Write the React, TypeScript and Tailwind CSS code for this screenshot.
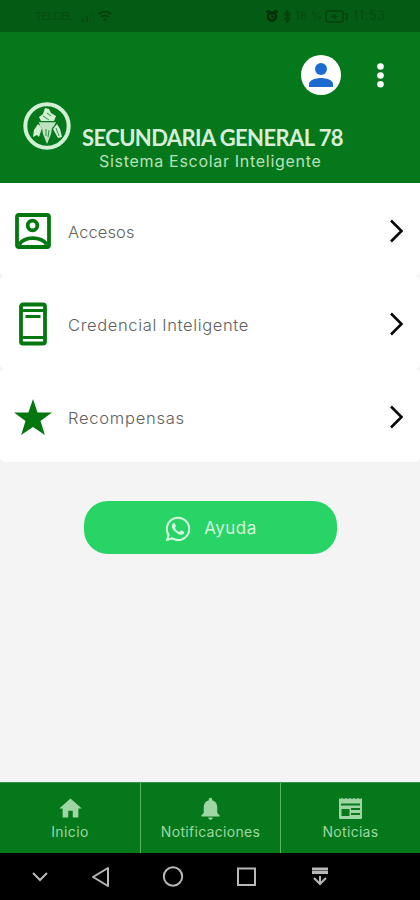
import type { ReactNode } from 'react';
import { MdHome, MdNotifications } from 'react-icons/md';
import { FaWhatsapp } from 'react-icons/fa';

const AccessIcon = () => (
  <svg width="36" height="36" viewBox="0 0 36 36" fill="none" stroke="#04780f" strokeWidth="3.8">
    <rect x="2" y="2" width="32" height="32" rx="2" />
    <circle cx="17.5" cy="12.5" r="4.8" />
    <path d="M4 31.5c3-4 8-6.3 13.5-6.3S29 27.5 32 31.5" />
  </svg>
);

const CardIcon = () => (
  <svg width="28" height="44" viewBox="0 0 28 44" fill="none" stroke="#04780f" strokeWidth="3.8">
    <rect x="2" y="2.5" width="24" height="39" rx="2" />
    <path d="M3 8.5h22M3 35.5h22" strokeWidth="2.8" />
    <path d="M6.5 14.5h15" strokeWidth="3" />
  </svg>
);

const StarIcon = () => (
  <svg width="38" height="36" viewBox="0 0 38 36" fill="#04780f">
    <path d="M19 0l4.6 13.6H38L26.5 22l4.4 14L19 28 7.1 36l4.4-14L0 13.6h14.4z" />
  </svg>
);

const SchoolLogo = () => (
  <svg width="48" height="48" viewBox="0 0 48 48" fill="none">
    <circle cx="24" cy="24" r="21.7" stroke="#d2eed3" strokeWidth="4" />
    <path d="M22 6l4 1 2 4 5 3-2 5H18l-2-4 4-3z" fill="#d2eed3" />
    <path d="M16 20h17l-2 4-2 2-1 6-4 10-4-10-1-6-2-2z" fill="#bfe2c1" />
    <path d="M15 22l4 4-3 9-2-2-4 2 1-7zM34 22l3 5 2 8-4 1-5-9z" fill="#d2eed3" />
    <path d="M17 19.8h15M23 27v7M26 28l-1 7M20 14l6 4M24 11l4 3M33 26l3 8" stroke="#04781b" strokeWidth=".8" />
  </svg>
);

const NewsIcon = () => (
  <svg width="25" height="23" viewBox="0 0 25 23">
    <path d="M1 1l1 1 2-1 2 1 2-1 2 1 2-1 2 1 2-1 2 1 2-1 2 1 2-1v20q0 1-1 1H2q-1 0-1-1z" fill="#9fd6a3" />
    <path d="M3 7.5h19M13 12h9M13 17h9" stroke="#04781b" strokeWidth="2" />
    <path d="M3.5 12h8v7h-8z" fill="#04781b" />
  </svg>
);

const rows: { label: string; icon: ReactNode; text: string }[] = [
  { label: 'Accesos', icon: <AccessIcon />, text: 'tracking-[0.1px]' },
  { label: 'Credencial Inteligente', icon: <CardIcon />, text: 'tracking-[0.65px]' },
  { label: 'Recompensas', icon: <StarIcon />, text: 'tracking-[0.75px]' },
];

const tabs: { label: string; icon: ReactNode; text: string }[] = [
  { label: 'Inicio', icon: <MdHome size={27} />, text: 'tracking-[0.4px]' },
  { label: 'Notificaciones', icon: <MdNotifications size={27} />, text: 'tracking-[0.3px]' },
  { label: 'Noticias', icon: <NewsIcon />, text: 'tracking-[0.3px]' },
];

function StatusBar() {
  return (
    <div className="flex h-8 items-center bg-[#045c14] pl-[35px] text-[12px] text-[#064a0e]">
      <span className="w-[36px] text-[11px] tracking-[-0.5px]">TELCEL</span>
      <svg className="ml-2.5" width="13" height="12" viewBox="0 0 13 12" fill="#064a0e">
        <path d="M0 9h3v3H0zM5 6h2v6H5z" />
        <path d="M9 3h1v9H9zM12 0h1v12h-1z" opacity=".4" />
      </svg>
      <svg className="ml-1" width="14" height="12" viewBox="0 0 14 12" fill="none" stroke="#063f0c" strokeWidth="2">
        <path d="M1 4q6-5 12 0M3 7q4-3 8 0M5.5 9.5h3" />
      </svg>
      <div className="ml-[154px] flex items-center">
        <svg width="12" height="12" viewBox="0 0 12 12" fill="none" stroke="#032d08">
          <circle cx="6" cy="6.5" r="4" strokeWidth="2.5" />
          <path d="M1 3V1h3M8 1h3v2M6 4v3h2" strokeWidth="1.5" />
        </svg>
        <svg className="ml-[5px]" width="9" height="13" viewBox="0 0 9 13" fill="none" stroke="#063f0c" strokeWidth="1.4">
          <path d="M1 3l6 6-3 3V1l3 3-6 6" />
        </svg>
        <span className="ml-[3px] w-[29px] whitespace-nowrap">18 %</span>
        <svg className="ml-px" width="23" height="13" viewBox="0 0 23 13" fill="none" stroke="#063f0c" strokeWidth="1.5">
          <rect x="1" y="1" width="17" height="11" rx="2" />
          <path d="M20 4h2v5h-2M6 6.5h7M9.5 4v5" />
        </svg>
        <span className="ml-[5px] text-[13px] tracking-[0.5px]">11:53</span>
      </div>
    </div>
  );
}

function Header() {
  return (
    <header className="h-[151px] bg-[#04781b]">
      <div className="flex h-[70px] items-start justify-end pt-[23px]">
        <div className="flex size-10 items-center justify-center rounded-full bg-white">
          <svg width="24" height="24" viewBox="0 0 24 24" fill="#1b6bd0">
            <circle cx="12" cy="6" r="6" />
            <path d="M0 24v-3c0-4 7-6 12-6s12 2 12 6v3z" />
          </svg>
        </div>
        <svg className="mt-2 mr-9 ml-[36px]" width="7" height="25" viewBox="0 0 7 25" fill="white">
          <circle cx="3.5" cy="3.5" r="3.3" />
          <circle cx="3.5" cy="12.5" r="3.3" />
          <circle cx="3.5" cy="21.3" r="3.3" />
        </svg>
      </div>
      <div className="flex pl-[23px]">
        <SchoolLogo />
        <div className="pt-[23px] pl-[11px] whitespace-nowrap">
          <h1 className="font-['Lato',sans-serif] text-[22px] leading-[26px] font-bold tracking-[-0.6px] text-[#d7efd8]">
            SECUNDARIA GENERAL 78
          </h1>
          <p className="pl-[17px] text-[16px] leading-5 tracking-[0.7px] text-[#b9e0bb]">Sistema Escolar Inteligente</p>
        </div>
      </div>
    </header>
  );
}

export default function App() {
  return (
    <div className="flex h-[900px] w-[420px] flex-col overflow-hidden bg-[#f4f4f4] font-['Inter',sans-serif]">
      <StatusBar />
      <Header />

      <main className="flex-1">
        {rows.map((row) => (
          <button key={row.label} className="flex h-[93px] w-full items-center rounded-[5px] bg-white pr-4 first:rounded-t-none">
            <span className="flex w-[66px] justify-center pt-0.5">{row.icon}</span>
            <span className={`flex-1 pt-[5px] pl-0.5 text-left text-[16.5px] font-light text-[#606060] ${row.text}`}>{row.label}</span>
            <svg className="mt-0.5" width="15" height="24" viewBox="0 0 15 24" fill="none" stroke="#080808" strokeWidth="2.6">
              <path d="M2 1.5L12.5 12 2 22.5" />
            </svg>
          </button>
        ))}

        <button className="mt-[39px] ml-[84px] flex h-[53px] w-[253px] items-center justify-center gap-3 rounded-[24px] bg-[#28d466] text-[#d5f8df]">
          <FaWhatsapp className="mt-0.5" size={28} />
          <span className="pt-0.5 text-[17px] tracking-[0.5px]">Ayuda</span>
        </button>
      </main>

      {/* Bottom tabs */}
      <nav className="grid h-[71px] grid-cols-[141px_140px_139px] divide-x divide-[#58b45f] border-t border-[#399348] bg-[#04781b]">
        {tabs.map((tab) => (
          <button key={tab.label} className="flex flex-col items-center pt-3 text-[#9fd6a3]">
            <span className="flex h-[27px] items-center">{tab.icon}</span>
            <span className={`text-[14px] leading-5 ${tab.text}`}>{tab.label}</span>
          </button>
        ))}
      </nav>

      {/* Android navigation */}
      <div className="flex h-[47px] items-center bg-black pl-8">
        <svg width="300" height="26" viewBox="0 0 300 26" fill="none" stroke="#b8b8b8" strokeWidth="2">
          <path d="M1 9l7 7 7-7" />
          <path d="M76 4v18L61 13z" strokeLinejoin="round" />
          <circle cx="141" cy="12.5" r="9.2" />
          <rect x="206" y="4.5" width="17" height="16.5" />
          <path d="M280 5h16M280 8.5h16" strokeWidth="2.8" />
          <path d="M288 12v8M282 14l6 6 6-6" />
        </svg>
      </div>
    </div>
  );
}
